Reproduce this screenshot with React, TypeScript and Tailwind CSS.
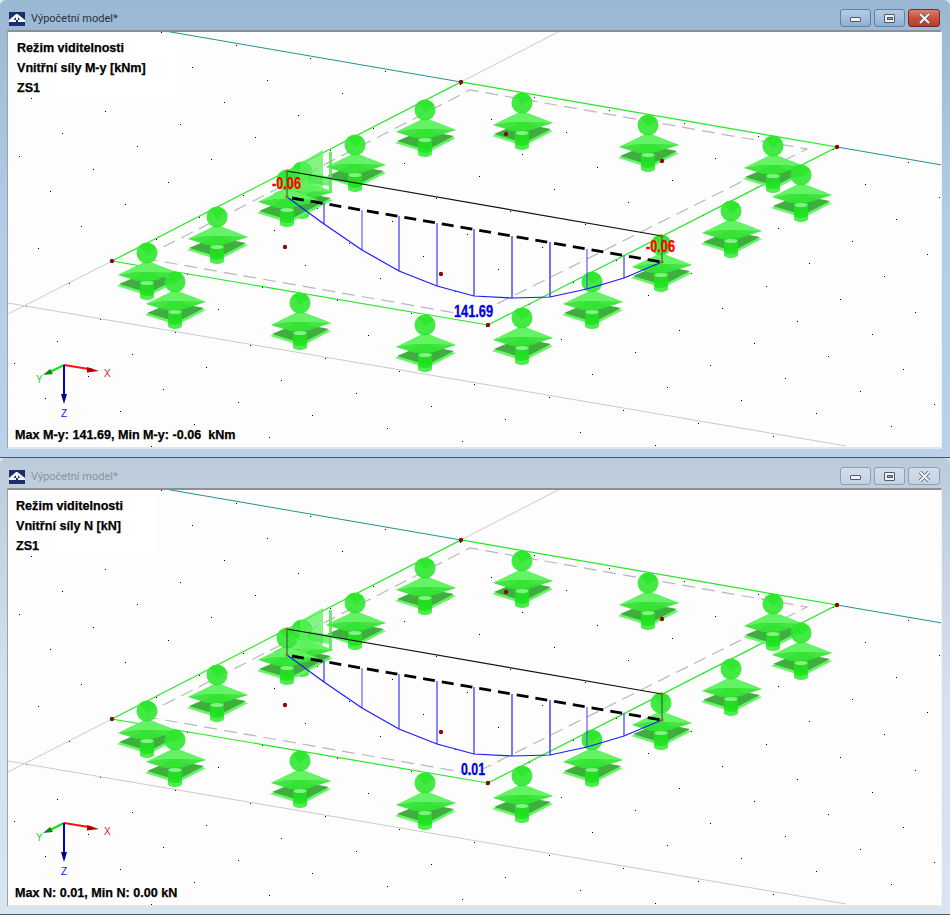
const supports = [
  [425, 110], [522, 103], [355, 145], [648, 125], [773, 146], [302, 172], [801, 175], [287, 180],
  [731, 211], [217, 217], [661, 245], [147, 253], [175, 282], [592, 282], [300, 303], [522, 318], [425, 325],
];

const verticals = [
  { x: 324, y: 224, c: "#1010ff", w: 1 },
  { x: 362, y: 250, c: "#4040ff", w: 1 },
  { x: 399, y: 271, c: "#1010ff", w: 1 },
  { x: 437, y: 286, c: "#6060ff", w: 1.5 },
  { x: 474, y: 296, c: "#0000ff", w: 1 },
  { x: 512, y: 298, c: "#7878ff", w: 2 },
  { x: 550, y: 297, c: "#4040ff", w: 1.5 },
  { x: 587, y: 289, c: "#4040ff", w: 1 },
  { x: 624, y: 278, c: "#6060ff", w: 1.5 },
];

const dots: [number, number][] = [];
for (let m = -12; m < 16; m++) {
  for (let n = -12; n < 14; n++) {
    const x = Math.round(163 + m * 74.7 + n * 31.3);
    const y = Math.round(389 + m * 13 + n * 35.2);
    if (x > 8 && x < 941 && y > 31 && y < 449) dots.push([x, y]);
  }
}

function Support({ x, y }: { x: number; y: number }) {
  return (
    <g transform={`translate(${x} ${y})`}>
      <path d="M-7 38 V44 A7 3 0 0 0 7 44 V38 Z" fill="#4cee4c" />
      <polygon points="-30,33 -2,21 31,28 2,43" fill="#66f566" />
      <polygon points="-28,31 -2,20 29,26 2,40" fill="#3fae3f" />
      <path d="M-7 16 V40 A7 3 0 0 0 7 40 V16 Z" fill="#1fe21f" opacity="0.92" />
      <ellipse cx="0" cy="30" rx="6.5" ry="2" fill="#9af29a" opacity="0.85" />
      <polygon points="0,8 31,20 9,27 -10,28 -29,22" fill="#36e436" opacity="0.95" />
      <polygon points="0,8 31,20 9,19 -12,19 -29,22" fill="#68f468" opacity="0.9" />
      <circle cx="0" cy="0" r="10.5" fill="#30e830" opacity="0.9" />
      <path d="M-7 -7 A10.5 10.5 0 0 1 9 -5 L0 2 Z" fill="#28e628" opacity="0.7" />
    </g>
  );
}

function Scene({ low }: { low: string }) {
  const isMoment = low === "141.69";
  return (
    <svg className="block" width="934" height="418" viewBox="8 32 934 418">
      {dots.map(([x, y], i) => (
        <rect key={i} x={x} y={y} width="1" height="1" fill="#000" />
      ))}
      <g fill="none" stroke="#cacaca" strokeWidth="1">
        <path d="M461 82 L560 31" />
        <path d="M112 261 L8 314" />
        <path d="M8 303 L846 446" />
      </g>
      <path d="M165 31 L461 82 M837 147 L942 165" fill="none" stroke="#26908c" strokeWidth="1" />
      <path
        d="M473 316 L142 258 L470 90 L807 149 Z"
        fill="none"
        stroke="#b8b8b8"
        strokeWidth="1.2"
        strokeDasharray="13 7"
      />
      <path d="M112 261 L461 82 L837 147 L488 325 Z" fill="none" stroke="#22e822" strokeWidth="1.2" />
      {supports.map(([x, y]) => (
        <Support key={`${x}-${y}`} x={x} y={y} />
      ))}
      {/* hinge plates on the beam end */}
      <polygon points="300,163 323,150 323,187 300,197" fill="#5cf05c" opacity="0.75" />
      <polygon points="308,173 330,177 330,186 308,183" fill="#3ee83e" opacity="0.7" />
      <rect x="329" y="152" width="3" height="41" fill="#4cec4c" opacity="0.85" />
      <path d="M287 171 L662 236" stroke="#111" strokeWidth="1.2" />
      <path d="M287 171 V197 M662 236 V262" stroke="#444" strokeWidth="1" />
      <path d="M292 198 L662 262" stroke="#000" strokeWidth="2.8" strokeDasharray="12 7" />
      {verticals.map((v) => (
        <path
          key={v.x}
          d={`M${v.x} ${Math.round(197 + (v.x - 287) * 0.173)} V${v.y}`}
          stroke={v.c}
          strokeWidth={v.w}
        />
      ))}
      <path
        d="M287 197 L324 224 L362 250 L399 271 L437 286 L474 296 L512 298 L550 297 L587 289 L624 278 L662 262"
        fill="none"
        stroke="#1a1aff"
        strokeWidth="1.2"
      />
      {[[287, 171], [287, 197], [662, 236], [662, 262]].map(([x, y]) => (
        <circle key={`${x}${y}`} cx={x} cy={y} r="1.6" fill="#9a6a10" />
      ))}
      {[[112, 261], [461, 82], [837, 147], [488, 325], [285, 247], [441, 274], [506, 134], [662, 161]].map(([x, y]) => (
        <circle key={`${x}${y}`} cx={x} cy={y} r="2.2" fill="#8b0a0a" />
      ))}
      {/* axis cross */}
      <path d="M64 365 L92 369.5" stroke="#ff1010" strokeWidth="2" />
      <polygon points="99,371 87,367 87,372.5" fill="#b00000" />
      <path d="M64 365 L48 373" stroke="#10e010" strokeWidth="2" />
      <polygon points="43,375 50,369 53,374" fill="#0a8a0a" />
      <path d="M64 365 V394" stroke="#0000e0" strokeWidth="2" />
      <polygon points="64,404 61,394 67,394" fill="#00008a" />
      <g className="font-['Liberation_Sans',sans-serif]" fontSize="10">
        <text x="104" y="377" fill="#e02020">X</text>
        <text x="36" y="383" fill="#20d020">Y</text>
        <text x="61" y="417" fill="#1010ff">Z</text>
      </g>
      <g className="font-['Liberation_Sans',sans-serif] font-bold" fontSize="16">
        <text
          x={isMoment ? 454 : 461}
          y="317"
          fill="#0000e0"
          stroke="#0000e0"
          strokeWidth="0.3"
          textLength={isMoment ? 39 : 24}
          lengthAdjust="spacingAndGlyphs"
        >
          {low}
        </text>
        {isMoment && (
          <g fill="#ff0000" stroke="#ff0000" strokeWidth="0.3">
            <text x="272" y="189" textLength="29" lengthAdjust="spacingAndGlyphs">-0.06</text>
            <text x="646" y="252" textLength="29" lengthAdjust="spacingAndGlyphs">-0.06</text>
          </g>
        )}
      </g>
    </svg>
  );
}

function CaptionButtons({ active }: { active: boolean }) {
  const base = active
    ? "border-[#5f82a8] bg-gradient-to-b from-[#b5cae1] via-[#a5bfdb] to-[#8eaed0]"
    : "border-[#8ea0b6] bg-gradient-to-b from-[#d3deea] to-[#c3d2e2]";
  const close = active
    ? "border-[#6b2c38] bg-gradient-to-b from-[#d9806f] via-[#c8503a] to-[#b83d28]"
    : base;
  return (
    <div className="flex gap-[3px] mr-[10px]">
      <div className={`flex h-[18px] w-[31px] items-center justify-center rounded-[3px] border ${base}`}>
        <div className="mt-[3px] h-[5px] w-[11px] rounded-[1px] border border-[#4e5a68] bg-[#eef2f6]" />
      </div>
      <div className={`flex h-[18px] w-[31px] items-center justify-center rounded-[3px] border ${base}`}>
        <div className="flex h-[9px] w-[11px] items-center justify-center rounded-[1px] border border-[#4e5a68] bg-[#eef2f6]">
          <div className="h-[3px] w-[6px] border border-[#4e5a68] bg-[#8fa3b8]" />
        </div>
      </div>
      <div className={`flex h-[18px] w-[32px] items-center justify-center rounded-[3px] border ${close}`}>
        <svg width="13" height="11" viewBox="0 0 13 11">
          <path d="M2 1 L11 10 M11 1 L2 10" stroke="#4e5a68" strokeWidth="3.4" />
          <path d="M2 1 L11 10 M11 1 L2 10" stroke="#f4f6f8" strokeWidth="2" />
        </svg>
      </div>
    </div>
  );
}

function AppIcon() {
  return (
    <svg width="16" height="14" viewBox="0 0 16 14">
      <rect width="16" height="14" fill="#1d2f6b" />
      <path d="M0 8 L7 2 H8.5 L16 8 H11 L9 5 V8 H7 V5 L4.5 8 Z" fill="#f4f6fa" />
      <rect y="8" width="16" height="2" fill="#f4f6fa" />
      <rect x="7" y="8" width="2" height="3" fill="#1d2f6b" />
    </svg>
  );
}

function ModelWindow({
  active,
  heading,
  caption,
  value,
  leftText,
  boxWidth,
}: {
  active: boolean;
  heading: string;
  caption: string;
  value: string;
  leftText: string;
  boxWidth: string;
}) {
  return (
    <div
      className={`relative flex flex-col rounded-t-[6px] border-b border-[#4d5560] ${
        active
          ? "h-[458px] bg-gradient-to-b from-[#9ab7d3] via-[#b4cde6] to-[#b9d1ea]"
          : "h-[457px] bg-gradient-to-b from-[#bccbda] via-[#d3e0ee] to-[#d7e4f2]"
      }`}
    >
      <div className="flex h-[30px] shrink-0 items-center justify-between">
        <div className="flex items-center pl-[9px] pt-[8px]">
          <AppIcon />
          <span
            className={`ml-[6px] font-['Roboto',sans-serif] text-[11px] ${
              active ? "text-[#26333f]" : "text-[#8b939b]"
            }`}
          >
            Výpočetní model*
          </span>
        </div>
        <div className="pt-[6px]">
          <CaptionButtons active={active} />
        </div>
      </div>
      <div className="relative ml-[7px] mr-[8px] h-[419px] overflow-hidden border-t-2 border-l border-r border-b-2 border-t-[#8f8f8f] border-l-[#a0a0a0] border-r-[#f2f2f2] border-b-[#e4e4e4] bg-[#fdfdfd] font-['Liberation_Sans',sans-serif]">
        <Scene low={value} />
        <div
          className="absolute left-[8px] top-[6px] flex flex-col bg-white text-[12.6px] font-bold leading-[20px] text-black [-webkit-text-stroke:0.25px_black]"
          style={{ width: boxWidth, paddingLeft: leftText }}
        >
          <span>Režim viditelnosti</span>
          <span>{heading}</span>
          <span>ZS1</span>
        </div>
        <div className="absolute left-[7px] bottom-[4px] text-[12.6px] font-bold leading-[16px] text-black whitespace-pre [-webkit-text-stroke:0.25px_black]">
          {caption}
        </div>
      </div>
    </div>
  );
}

export default function App() {
  return (
    <div className="h-[915px] w-[950px] overflow-hidden bg-[#d7e4f2]">
      <ModelWindow
        active
        heading="Vnitřní síly M-y [kNm]"
        caption="Max M-y: 141.69, Min M-y: -0.06  kNm"
        value="141.69"
        leftText="1px"
        boxWidth="162px"
      />
      <ModelWindow
        active={false}
        heading="Vnitřní síly N [kN]"
        caption="Max N: 0.01, Min N: 0.00 kN"
        value="0.01"
        leftText="0px"
        boxWidth="140px"
      />
    </div>
  );
}
